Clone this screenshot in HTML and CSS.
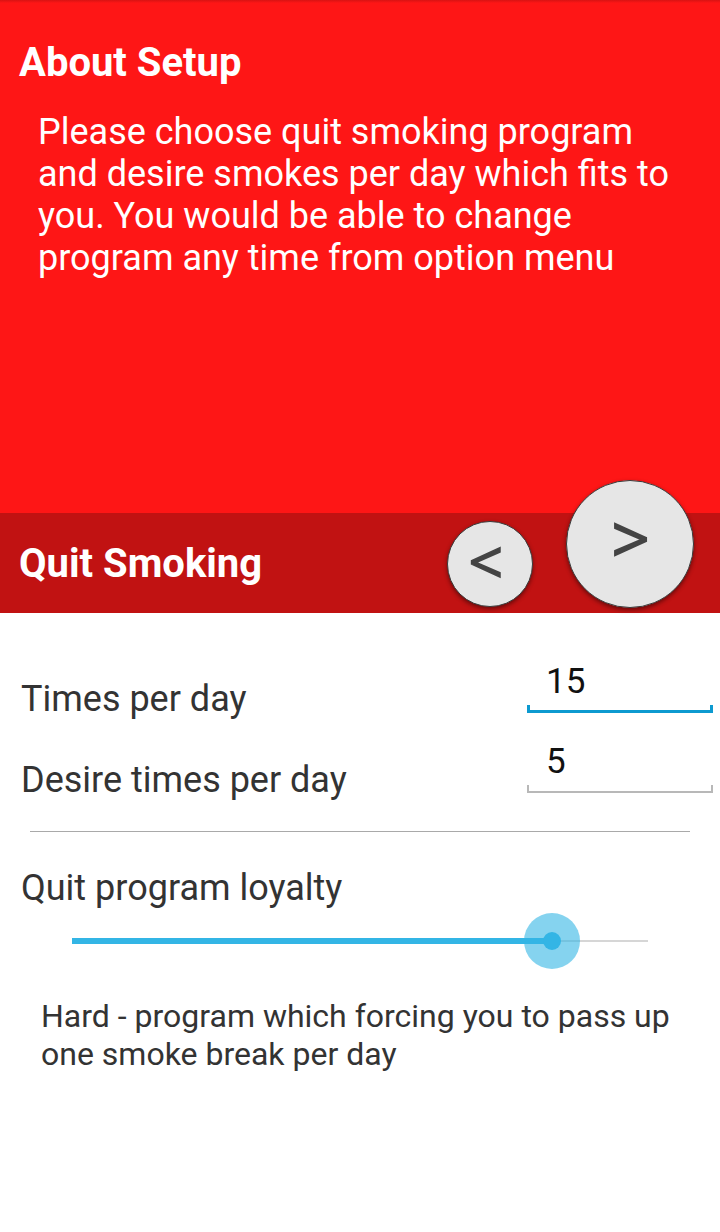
FILE: index.html
```html
<!DOCTYPE html>
<html>
<head>
<meta charset="utf-8">
<link rel="stylesheet" href="styles.css">
</head>
<body>
<div class="screen">
  <section class="about">
    <h1 class="title">About Setup</h1>
    <p class="intro">Please choose quit smoking program and desire smokes per day which fits to you. You would be able to change program any time from option menu</p>
  </section>
  <section class="band">
    <h2 class="title">Quit Smoking</h2>
    <button class="nav nav-prev">&lt;</button>
    <button class="nav nav-next">&gt;</button>
  </section>
  <section class="form">
    <div class="labels">
      <div class="label">Times per day</div>
      <div class="label">Desire times per day</div>
    </div>
    <div class="inputs">
      <div class="field field-active">15</div>
      <div class="field">5</div>
    </div>
  </section>
  <hr class="divider">
  <section class="loyalty">
    <div class="label">Quit program loyalty</div>
    <div class="slider">
      <div class="track">
        <div class="fill" style="width: 480px"></div>
        <div class="thumb" style="left: 480px"></div>
      </div>
    </div>
    <p class="desc">Hard - program which forcing you to pass up one smoke break per day</p>
  </section>
</div>
</body>
</html>
```
FILE: styles.css
```css
* { box-sizing: border-box; }
html, body {
  margin: 0;
  padding: 0;
  background: #ffffff;
}
body {
  font-family: Roboto, "Liberation Sans", sans-serif;
  width: 720px;
  height: 1232px;
  overflow: hidden;
}
.screen {
  display: flex;
  flex-direction: column;
}
.about {
  height: 513px;
  background: linear-gradient(#d81313, #fe1616 3px);
  padding: 39px 0 0 0;
}
.title {
  margin: 0;
  font-size: 40px;
  line-height: 48px;
  font-weight: 700;
  color: #ffffff;
  padding-left: 19px;
}
.intro {
  margin: 24px 0 0 0;
  padding: 0 30px 0 38px;
  font-size: 36px;
  line-height: 42px;
  color: #ffffff;
}
.band {
  position: relative;
  height: 100px;
  background: #c11212;
  padding-top: 27px;
}
.nav {
  position: absolute;
  border-radius: 50%;
  background: #e6e6e6;
  border: 1.5px solid #3c3c3c;
  box-shadow: 0 2px 4px rgba(0, 0, 0, 0.45);
  color: #444444;
  font-family: Roboto, "Liberation Sans", sans-serif;
  font-weight: 300;
  -webkit-text-stroke: 1.6px #444444;
  padding: 0;
  display: flex;
  align-items: center;
  justify-content: center;
}
.nav-prev {
  left: 447px;
  top: 8px;
  width: 86px;
  height: 86px;
  font-size: 70px;
  line-height: 1;
  padding: 0 6px 6px 0;
}
.nav-next {
  left: 566px;
  top: -33px;
  width: 128px;
  height: 128px;
  font-size: 76px;
  line-height: 1;
  padding-bottom: 12px;
}
.form {
  display: flex;
  justify-content: space-between;
  padding: 0 7px 0 21px;
}
.labels {
  display: flex;
  flex-direction: column;
  gap: 39px;
  margin-top: 65px;
}
.label {
  font-size: 36px;
  line-height: 42px;
  color: #333333;
}
.inputs {
  display: flex;
  flex-direction: column;
  margin-top: 49px;
}
.field {
  width: 186px;
  height: 51px;
  padding-left: 19px;
  font-size: 35px;
  line-height: 40px;
  color: #111111;
  background:
    linear-gradient(#b8b8b8, #b8b8b8) left bottom / 100% 2px no-repeat,
    linear-gradient(#b8b8b8, #b8b8b8) left bottom / 2px 8px no-repeat,
    linear-gradient(#b8b8b8, #b8b8b8) right bottom / 2px 8px no-repeat;
  margin-top: 29px;
}
.field-active {
  margin-top: 0;
  background:
    linear-gradient(#0d9ad0, #0d9ad0) left bottom / 100% 3px no-repeat,
    linear-gradient(#0d9ad0, #0d9ad0) left bottom / 3px 8px no-repeat,
    linear-gradient(#0d9ad0, #0d9ad0) right bottom / 3px 8px no-repeat;
}
.divider {
  margin: 30px 30px 0 30px;
  border: none;
  height: 1px;
  background: #a9a9a9;
}
.loyalty {
  padding: 0 0 0 21px;
  margin-top: 35px;
}
.slider {
  height: 56px;
  margin-top: 4px;
  display: flex;
  align-items: center;
  padding: 0 72px 0 51px;
}
.track {
  position: relative;
  flex: 1;
  height: 2px;
  background: #d6d6d6;
}
.fill {
  position: absolute;
  left: 0;
  top: -2px;
  height: 6px;
  background: #33b5e5;
}
.thumb {
  position: absolute;
  top: 1px;
  width: 56px;
  height: 56px;
  margin: -28px 0 0 -28px;
  border-radius: 50%;
  background: rgba(51, 181, 229, 0.6);
}
.thumb::after {
  content: "";
  position: absolute;
  left: 19px;
  top: 19px;
  width: 18px;
  height: 18px;
  border-radius: 50%;
  background: #33b5e5;
}
.desc {
  margin: 28px 0 0 0;
  padding: 0 20px 0 20px;
  font-size: 32px;
  line-height: 38px;
  color: #333333;
}
```
